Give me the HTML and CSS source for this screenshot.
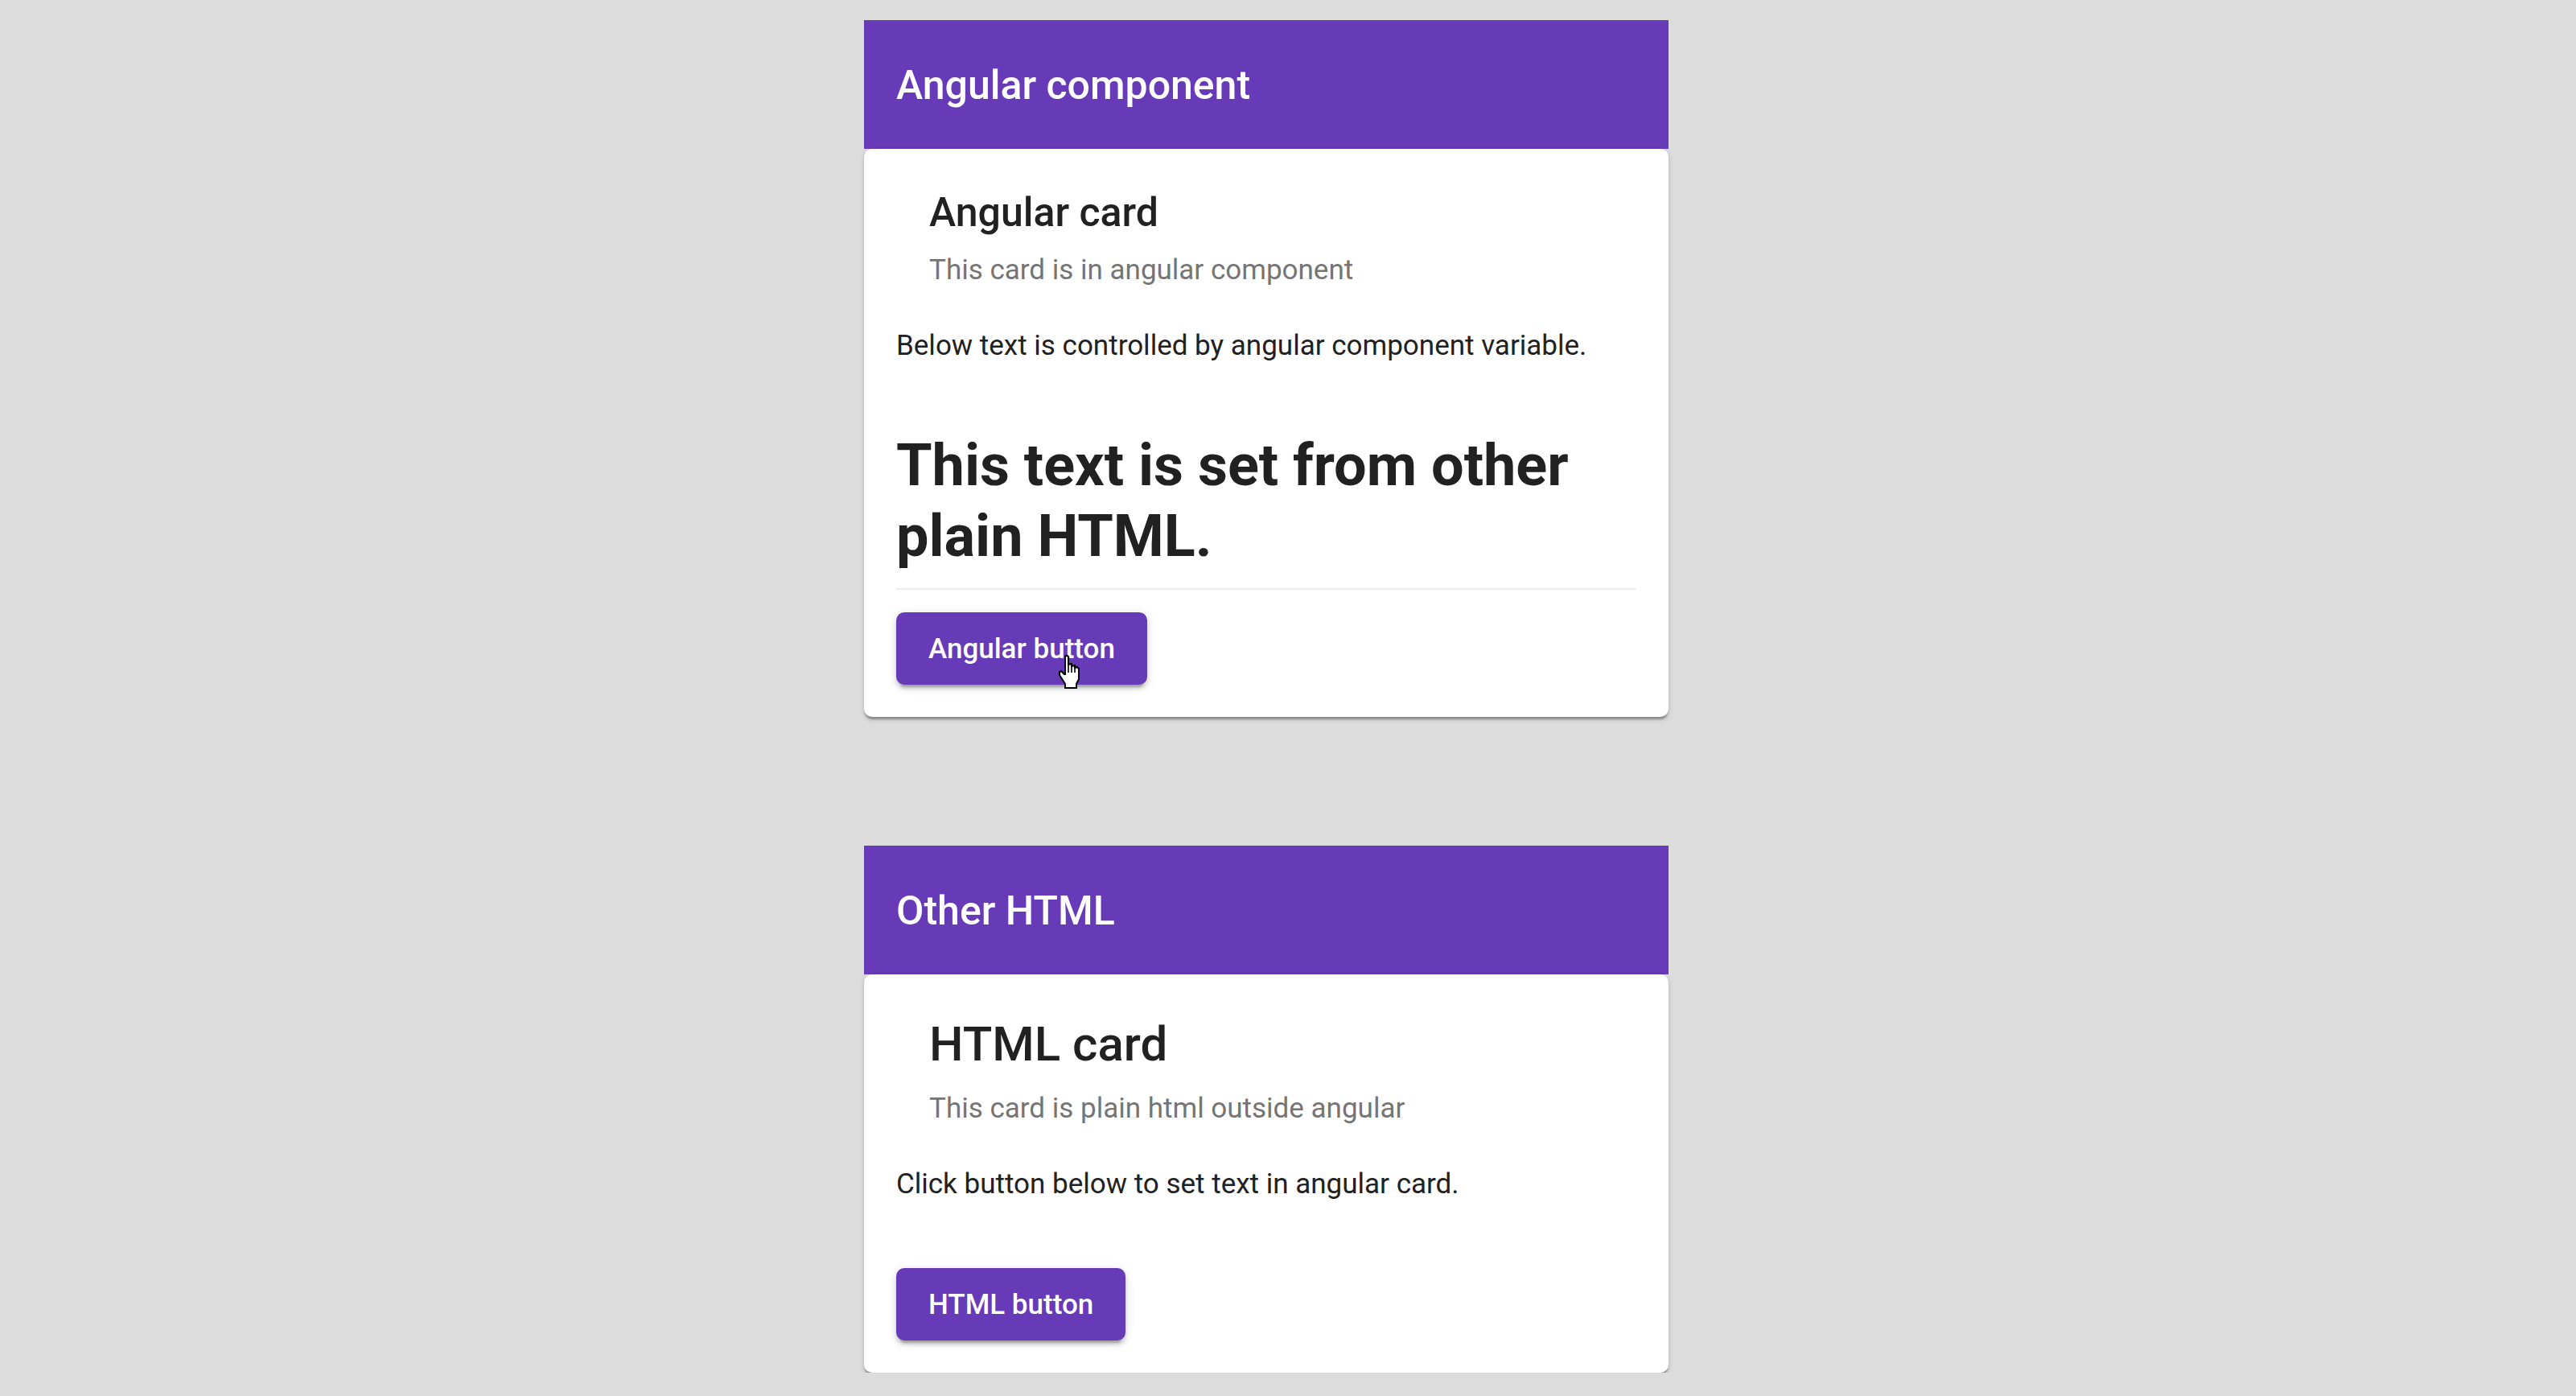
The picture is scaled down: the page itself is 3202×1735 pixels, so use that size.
FILE: index.html
```html
<!DOCTYPE html>
<html lang="en">
<head>
<meta charset="utf-8">
<title>Angular component</title>
<link rel="stylesheet" href="styles.css">
</head>
<body>
<main class="page">
  <section class="panel">
    <header class="toolbar">Angular component</header>
    <div class="card card-angular">
      <div class="card-header">
        <div class="card-title title-sm">Angular card</div>
        <div class="card-subtitle">This card is in angular component</div>
      </div>
      <p class="body-text">Below text is controlled by angular component variable.</p>
      <h1 class="big-text">This text is set from other plain HTML.</h1>
      <hr class="divider">
      <div class="actions">
        <button class="btn" type="button">Angular button
          <svg class="cursor" width="30" height="42" viewBox="0 0 15 21" aria-hidden="true">
            <path d="M5 1.5 Q5 0.5 6 0.5 Q7 0.5 7 1.5 L7 6 L9 5.5 L9 7 L11 6.5 L11 8 L12.5 7.5 L13.5 8.5 L13.5 15 L12 18 L12 20.5 L5 20.5 L5 18 L1.5 12.5 L1.5 10.5 L2.5 10 L4.5 12 L5 12 Z" fill="#fff" stroke="#000" stroke-width="1" stroke-linejoin="miter"/>
            <path d="M7 6 L7 11 M9 7 L9 11 M11 8 L11 11" stroke="#000" stroke-width="0.8" fill="none"/>
          </svg>
        </button>
      </div>
    </div>
  </section>

  <section class="panel panel-second">
    <header class="toolbar">Other HTML</header>
    <div class="card card-html">
      <div class="card-header">
        <div class="card-title title-lg">HTML card</div>
        <div class="card-subtitle">This card is plain html outside angular</div>
      </div>
      <p class="body-text">Click button below to set text in angular card.</p>
      <div class="actions actions-html">
        <button class="btn" type="button">HTML button</button>
      </div>
    </div>
  </section>
</main>
</body>
</html>
```
FILE: styles.css
```css
html, body {
  margin: 0;
  padding: 0;
  background: #dcdcdc;
}

body {
  font-family: Roboto, "Noto Sans", "Liberation Sans", sans-serif;
  color: #212121;
}

.page {
  padding: 25px 0 0 1074px;
  display: flex;
  flex-direction: column;
}

.panel {
  width: 1000px;
  display: flex;
  flex-direction: column;
}

.panel-second {
  margin-top: 160px;
}

.toolbar {
  height: 160px;
  background: #673ab7;
  color: #ffffff;
  font-size: 50px;
  font-weight: 500;
  line-height: 157px;
  padding: 3px 40px 0;
  box-sizing: border-box;
}

.card {
  background: #ffffff;
  border-radius: 10px;
  box-shadow: 0 5px 2.5px -2.5px rgba(0,0,0,0.2), 0 2.5px 2.5px 0 rgba(0,0,0,0.14), 0 2.5px 7.5px 0 rgba(0,0,0,0.12);
  padding: 0 40px 40px;
  display: flex;
  flex-direction: column;
}

.card-header {
  padding-left: 41px;
  display: flex;
  flex-direction: column;
}

.card-title {
  line-height: 80px;
  font-weight: 500;
  color: #212121;
}

.title-sm {
  font-size: 50px;
  margin-top: 39px;
}

.title-lg {
  font-size: 60px;
  margin-top: 47px;
}

.card-subtitle {
  font-size: 35px;
  line-height: 50px;
  color: #757575;
}

.card-angular .card-subtitle {
  margin-top: 7px;
}

.card-html .card-subtitle {
  margin-top: 15px;
}

.body-text {
  margin: 44px 0 0;
  font-size: 35px;
  line-height: 50px;
  color: #212121;
}

.big-text {
  margin: 80px 0 0;
  font-size: 72px;
  line-height: 88px;
  font-weight: 700;
  color: #212121;
}

.divider {
  margin: 20px 0 0;
  border: none;
  height: 2px;
  background: #eeeeee;
}

.actions {
  margin-top: 28px;
  display: flex;
}

.actions-html {
  margin-top: 79px;
}

.btn {
  position: relative;
  height: 90px;
  padding: 0 40px;
  border: none;
  border-radius: 10px;
  background: #673ab7;
  color: #ffffff;
  font-family: Roboto, "Noto Sans", "Liberation Sans", sans-serif;
  font-size: 35px;
  font-weight: 500;
  box-shadow: 0 7.5px 2.5px -5px rgba(0,0,0,0.2), 0 5px 5px 0 rgba(0,0,0,0.14), 0 2.5px 12.5px 0 rgba(0,0,0,0.12);
}

.cursor {
  position: absolute;
  left: 200px;
  top: 53px;
}
```
